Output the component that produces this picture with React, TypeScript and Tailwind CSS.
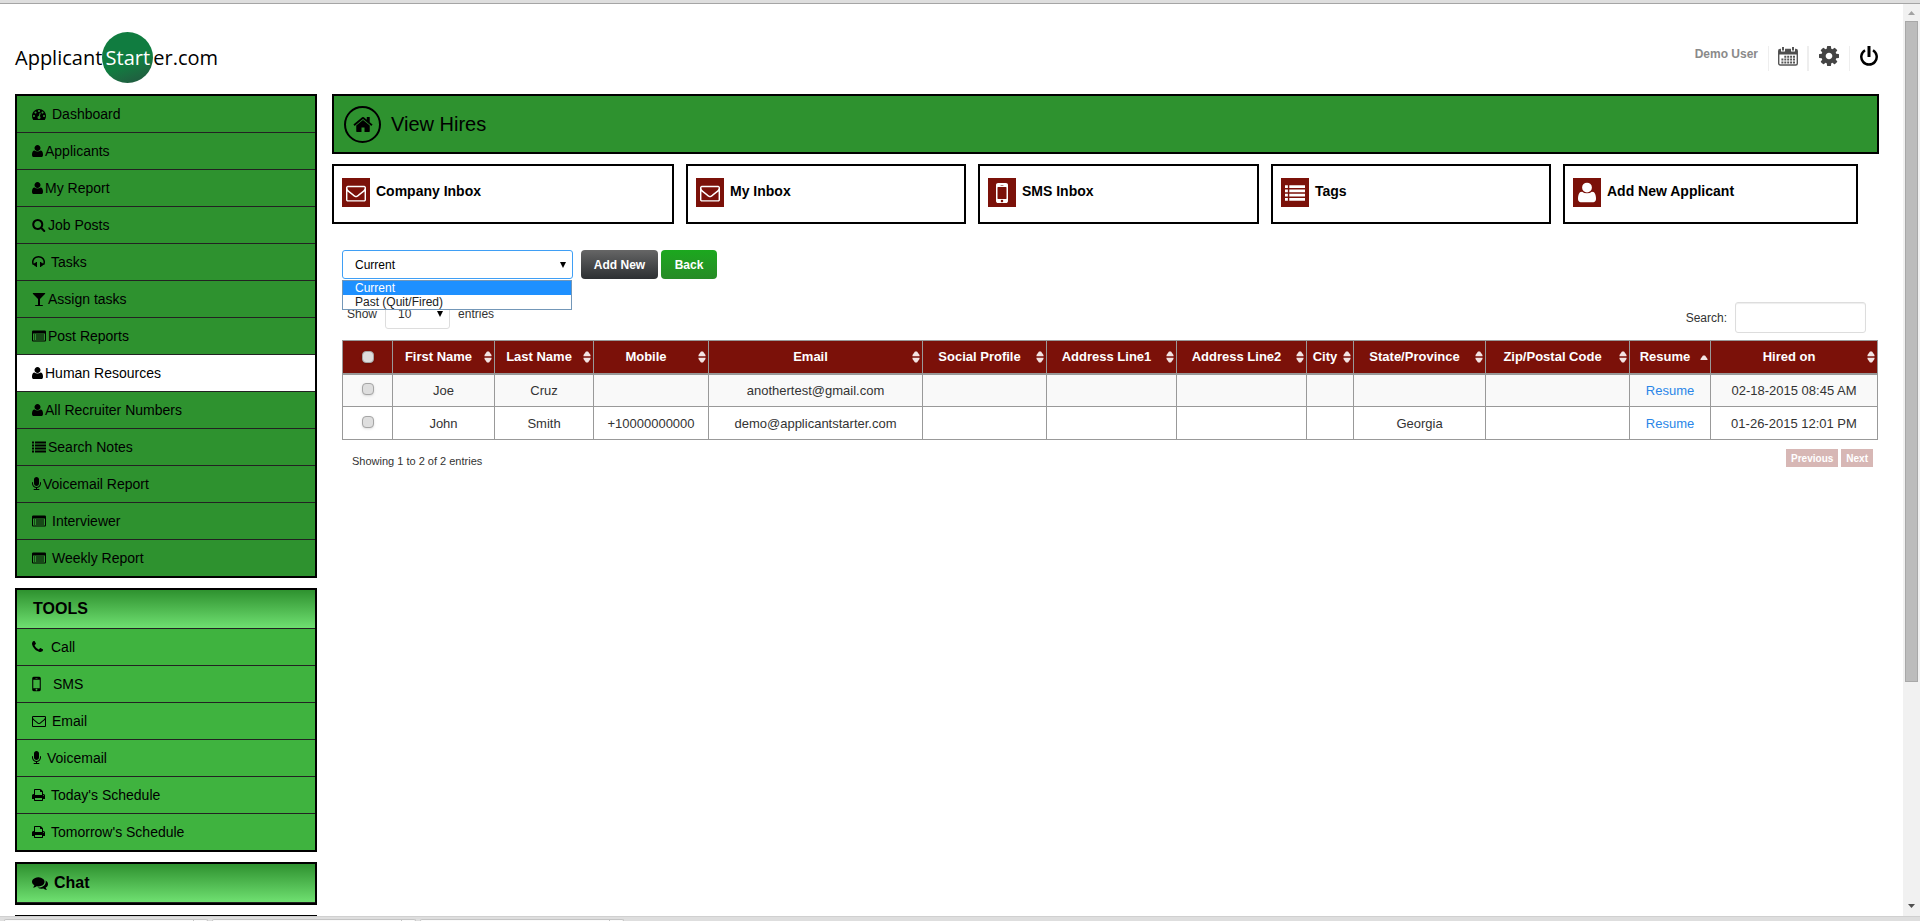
import React from "react";

interface Glyph {
  x: number;
  w: number;
  d: string;
}

// Glyphs on a 1792 unit em, x and w are the side crop of each one
const glyphs: Record<string, Glyph> = {
  user: {
    x: 256,
    w: 1408,
    d: "M1664 1399q0 109-62.5 187t-150.5 78h-982q-88 0-150.5-78t-62.5-187q0-85 8.5-160.5t31.5-152 58.5-131 94-89 134.5-34.5q131 128 377 128t377-128q76 0 134.5 34.5t94 89 58.5 131 31.5 152 8.5 160.5zm-320-887q0 159-112.5 271.5t-271.5 112.5-271.5-112.5-112.5-271.5 112.5-271.5 271.5-112.5 271.5 112.5 112.5 271.5z",
  },
  search: {
    x: 64,
    w: 1728,
    d: "M1216 832q0-185-131.5-316.5t-316.5-131.5-316.5 131.5-131.5 316.5 131.5 316.5 316.5 131.5 316.5-131.5 131.5-316.5zm512 832q0 52-38 90t-90 38q-54 0-90-38l-343-342q-179 124-399 124-143 0-273.5-55.5t-225-150-150-225-55.5-273.5 55.5-273.5 150-225 225-150 273.5-55.5 273.5 55.5 225 150 150 225 55.5 273.5q0 220-124 399l343 343q37 37 37 90z",
  },
  home: {
    x: 64,
    w: 1664,
    d: "M1472 992v480q0 26-19 45t-45 19h-384v-384h-256v384h-384q-26 0-45-19t-19-45v-480q0-1 .5-3t.5-3l575-474 575 474q1 2 1 6zm223-69l-62 74q-8 9-21 11h-3q-13 0-21-7l-692-577-692 577q-12 8-24 7-13-2-21-11l-62-74q-8-10-7-23.5t11-21.5l719-599q32-26 76-26t76 26l244 204v-195q0-14 9-23t23-9h192q14 0 23 9t9 23v408l219 182q10 8 11 21.5t-7 23.5z",
  },
  cog: {
    x: 128,
    w: 1536,
    d: "M1152 896q0-106-75-181t-181-75-181 75-75 181 75 181 181 75 181-75 75-181zm512-109v222q0 12-8 23t-20 13l-185 28q-19 54-39 91 35 50 107 138 10 12 10 25t-9 23q-27 37-99 108t-94 71q-12 0-26-9l-138-108q-44 23-91 38-16 136-29 186-7 28-36 28h-222q-14 0-24.5-8.5t-11.5-21.5l-28-184q-49-16-90-37l-141 107q-10 9-25 9-14 0-25-11-126-114-165-168-7-10-7-23 0-12 8-23 15-21 51-66.5t54-70.5q-27-50-41-99l-183-27q-13-2-21-12.5t-8-23.5v-222q0-12 8-23t19-13l186-28q14-46 39-92-40-57-107-138-10-12-10-24 0-10 9-23 26-36 98.5-107.5t94.5-71.5q13 0 26 10l138 107q44-23 91-38 16-136 29-186 7-28 36-28h222q14 0 24.5 8.5t11.5 21.5l28 184q49 16 90 37l142-107q9-9 24-9 13 0 25 10 129 119 165 170 7 8 7 22 0 12-8 23-15 21-51 66.5t-54 70.5q26 50 41 98l183 28q13 2 21 12.5t8 23.5z",
  },
  envelope: {
    x: 0,
    w: 1792,
    d: "M1664 1504v-768q-32 36-69 66-268 206-426 338-51 43-83 67t-86.5 48.5-102.5 24.5h-2q-48 0-102.5-24.5t-86.5-48.5-83-67q-158-132-426-338-37-30-69-66v768q0 13 9.5 22.5t22.5 9.5h1472q13 0 22.5-9.5t9.5-22.5zm0-1051v-24.5l-.5-13-3-12.5-5.5-9-9-7.5-14-2.5h-1472q-13 0-22.5 9.5t-9.5 22.5q0 168 147 284 193 152 401 317 6 5 35 29.5t46 37.5 44.5 31.5 50.5 27.5 43 9h2q20 0 43-9t50.5-27.5 44.5-31.5 46-37.5 35-29.5q208-165 401-317 54-43 100.5-115.5t46.5-131.5zm128-37v1088q0 66-47 113t-113 47h-1472q-66 0-113-47t-47-113v-1088q0-66 47-113t113-47h1472q66 0 113 47t47 113z",
  },
  mobile: {
    x: 512,
    w: 768,
    d: "M976 1408q0-33-23.5-56.5t-56.5-23.5-56.5 23.5-23.5 56.5 23.5 56.5 56.5 23.5 56.5-23.5 23.5-56.5zm208-160v-704q0-13-9.5-22.5t-22.5-9.5h-512q-13 0-22.5 9.5t-9.5 22.5v704q0 13 9.5 22.5t22.5 9.5h512q13 0 22.5-9.5t9.5-22.5zm-192-848q0-16-16-16h-160q-16 0-16 16t16 16h160q16 0 16-16zm288-16v1024q0 52-38 90t-90 38h-512q-52 0-90-38t-38-90v-1024q0-52 38-90t90-38h512q52 0 90 38t38 90z",
  },
  list: {
    x: 0,
    w: 1792,
    d: "M0 1344h256v256h-256zM0 960h256v256h-256zM0 576h256v256h-256zM384 1344h1408v256h-1408zM0 192h256v256h-256zM384 960h1408v256h-1408zM384 576h1408v256h-1408zM384 192h1408v256h-1408z",
  },
  listAlt: {
    x: 0,
    w: 1792,
    d: "M256 1216h128v128h-128zM256 960h128v128h-128zM256 704h128v128h-128zM512 1216h1024v128h-1024zM512 960h1024v128h-1024zM512 704h1024v128h-1024zM1664 1440v-832q0-13-9.500-22.500t-22.500-9.500h-1472q-13 0-22.500 9.500t-9.500 22.500v832q0 13 9.500 22.500t22.500 9.500h1472q13 0 22.500-9.500t9.500-22.500zM1792 352v1088q0 66-47 113t-113 47h-1472q-66 0-113-47t-47-113v-1088q0-66 47-113t113-47h1472q66 0 113 47t47 113z",
  },
  microphone: {
    x: 320,
    w: 1152,
    d: "M1472 704v128q0 221-147.5 384.5t-364.5 187.5v132h256q26 0 45 19t19 45-19 45-45 19h-640q-26 0-45-19t-19-45 19-45 45-19h256v-132q-217-24-364.5-187.5t-147.5-384.5v-128q0-26 19-45t45-19 45 19 19 45v128q0 185 131.5 316.5t316.5 131.5 316.5-131.5 131.5-316.5v-128q0-26 19-45t45-19 45 19 19 45zm-256-384v512q0 132-94 226t-226 94-226-94-94-226v-512q0-132 94-226t226-94 226 94 94 226z",
  },
  phone: {
    x: 192,
    w: 1408,
    d: "M1600 1240q0 27-10 70.5t-21 68.5q-21 50-122 106-94 51-186 51-27 0-53-3.5t-57.5-12.500-47-14.500-55.500-20.500-49-18q-98-35-175-83-127-79-264-216t-216-264q-48-77-83-175-3-9-18-49t-20.500-55.500-14.500-47-12.500-57.500-3.500-53q0-92 51-186 56-101 106-122 25-11 68.500-21t70.500-10q14 0 21 3 18 6 53 76 11 19 30 54t35 63.500 31 53.500q3 4 17.500 25t21.500 35.500 7 28.500q0 20-28.500 50t-62 55-62 53-28.500 46q0 9 5 22.500t8.500 20.500 14 24 11.500 19q76 137 174 235t235 174q2 1 19 11.500t24 14 20.500 8.500 22.500 5q18 0 46-28.500t53-62 55-62 50-28.500q14 0 28.500 7t35.500 21.500 25 17.500q25 15 53.500 31t63.500 35 54 30q70 35 76 53 3 7 3 21z",
  },
  glass: {
    x: 0,
    w: 1792,
    d: "M1699 186q0 35-43 78l-632 632v768h320q26 0 45 19t19 45-19 45-45 19h-896q-26 0-45-19t-19-45 19-45 45-19h320v-768l-632-632q-43-43-43-78 0-23 18-36.5t38-17.5 43-4h1408q23 0 43 4t38 17.5 18 36.5z",
  },
  headphones: {
    x: 64,
    w: 1664,
    d: "M1728 886q0 166-60 314l-20 49-185 33q-22 83-90.5 136.5t-156.5 53.5v32q0 14-9 23t-23 9h-64q-14 0-23-9t-9-23v-576q0-14 9-23t23-9h64q14 0 23 9t9 23v32q71 0 130 35.5t93 95.5l68-12q29-95 29-193 0-148-88-279t-236.5-209-315.5-78-315.5 78-236.500 209-88 279q0 98 29 193l68 12q34-60 93-95.500t130-35.500v-32q0-14 9-23t23-9h64q14 0 23 9t9 23v576q0 14-9 23t-23 9h-64q-14 0-23-9t-9-23v-32q-88 0-156.500-53.500t-90.500-136.500l-185-33-20-49q-60-148-60-314 0-151 67-291t179-242.500 266-163.500 320-61 320 61 266 163.500 179 242.500 67 291z",
  },
  dashboard: {
    x: 0,
    w: 1792,
    d: "M384 1152q0-53-37.5-90.5t-90.5-37.5-90.5 37.5-37.5 90.5 37.5 90.5 90.5 37.5 90.5-37.5 37.5-90.5zm192-448q0-53-37.5-90.5t-90.5-37.5-90.5 37.5-37.5 90.5 37.5 90.5 90.5 37.5 90.5-37.5 37.5-90.5zm428 481l101-382q6-26-7.5-48.5t-38.5-29.5-48 6.5-30 39.5l-101 382q-60 5-107 43.5t-63 98.5q-20 77 20 146t117 89 146-20 89-117q16-60-6-117t-72-91zm660-33q0-53-37.5-90.5t-90.5-37.5-90.5 37.5-37.5 90.5 37.5 90.5 90.5 37.5 90.5-37.5 37.5-90.5zm-640-640q0-53-37.5-90.5t-90.5-37.5-90.5 37.5-37.5 90.5 37.5 90.5 90.5 37.5 90.5-37.5 37.5-90.5zm448 192q0-53-37.5-90.5t-90.5-37.5-90.5 37.5-37.5 90.5 37.5 90.5 90.5 37.5 90.5-37.5 37.5-90.5zm320 448q0 261-141 483-19 29-54 29h-1402q-35 0-54-29-141-221-141-483 0-182 71-348t191-286 286-191 348-71 348 71 286 191 191 286 71 348z",
  },
  print: {
    x: 64,
    w: 1664,
    d: "M448 1536h896v-256h-896v256zm0-640h896v-384h-160q-40 0-68-28t-28-68v-160h-640v640zm1152 64q0-26-19-45t-45-19-45 19-19 45 19 45 45 19 45-19 19-45zm128 0v416q0 13-9.5 22.5t-22.5 9.5h-224v160q0 40-28 68t-68 28h-960q-40 0-68-28t-28-68v-160h-224q-13 0-22.5-9.5t-9.5-22.5v-416q0-79 56.5-135.5t135.5-56.5h64v-544q0-40 28-68t68-28h672q40 0 88 20t76 48l152 152q28 28 48 76t20 88v256h64q79 0 135.5 56.5t56.5 135.5z",
  },
  comments: {
    x: 0,
    w: 1792,
    d: "M1408 768q0 139-94 257t-256.5 186.5-353.5 68.5q-86 0-176-16-124 88-278 128-36 9-86 16h-3q-11 0-20.5-8t-11.5-21q-1-3-1-6.5t.5-6.5 2-6l2.5-5 3.5-5.5 4-5 4.5-5 4-4.5q5-6 23-25t26-29.5 22.5-29 25-38.5 20.5-44q-124-72-195-177t-71-224q0-139 94-257t256.5-186.5 353.5-68.5 353.5 68.5 256.5 186.5 94 257zm384 256q0 120-71 224.5t-195 176.5q10 24 20.5 44t25 38.5 22.5 29 26 29.5 23 25q1 1 4 4.5t4.5 5 4 5 3.5 5.5l2.5 5 2 6 .5 6.5-1 6.5q-3 14-13 22t-22 7q-50-7-86-16-154-40-278-128-90 16-176 16-271 0-472-132 58 4 88 4 161 0 309-45t264-129q125-92 192-212t67-254q0-77-23-152 129 71 204 178t75 230z",
  },
};

const Icon: React.FC<{ name: string; size?: number }> = ({ name, size = 14 }) => {
  const g = glyphs[name];
  return (
    <svg
      aria-hidden="true"
      className="shrink-0"
      width={Math.round((g.w / 1792) * size)}
      height={size}
      viewBox={`${g.x} 0 ${g.w} 1792`}
      fill="currentColor"
    >
      <path d={g.d} />
    </svg>
  );
};

interface MenuItem {
  label: string;
  icon: string;
  gap: string;
  size?: number;
  active?: boolean;
}

const mainMenu: MenuItem[] = [
  { label: "Dashboard", icon: "dashboard", gap: "gap-1.5" },
  { label: "Applicants", icon: "user", gap: "gap-0.5" },
  { label: "My Report", icon: "user", gap: "gap-0.5" },
  { label: "Job Posts", icon: "search", gap: "gap-0.5" },
  { label: "Tasks", icon: "headphones", gap: "gap-1.5" },
  { label: "Assign tasks", icon: "glass", gap: "gap-0.5" },
  { label: "Post Reports", icon: "listAlt", gap: "gap-0.5" },
  { label: "Human Resources", icon: "user", gap: "gap-0.5", active: true },
  { label: "All Recruiter Numbers", icon: "user", gap: "gap-0.5" },
  { label: "Search Notes", icon: "list", gap: "gap-0.5" },
  { label: "Voicemail Report", icon: "microphone", gap: "gap-0.5" },
  { label: "Interviewer", icon: "listAlt", gap: "gap-1.5" },
  { label: "Weekly Report", icon: "listAlt", gap: "gap-1.5" },
];

const toolsMenu: MenuItem[] = [
  { label: "Call", icon: "phone", gap: "gap-2" },
  { label: "SMS", icon: "mobile", gap: "gap-3", size: 20 },
  { label: "Email", icon: "envelope", gap: "gap-1.5" },
  { label: "Voicemail", icon: "microphone", gap: "gap-1.5" },
  { label: "Today's Schedule", icon: "print", gap: "gap-1.5" },
  { label: "Tomorrow's Schedule", icon: "print", gap: "gap-1.5" },
];

const cards = [
  { label: "Company Inbox", icon: "envelope", size: 20 },
  { label: "My Inbox", icon: "envelope", size: 20 },
  { label: "SMS Inbox", icon: "mobile", size: 28 },
  { label: "Tags", icon: "list", size: 20 },
  { label: "Add New Applicant", icon: "user", size: 23 },
];

interface Column {
  label: string;
  width: number;
  sorted?: boolean;
}

const columns: Column[] = [
  { label: "First Name", width: 102 },
  { label: "Last Name", width: 99 },
  { label: "Mobile", width: 115 },
  { label: "Email", width: 214 },
  { label: "Social Profile", width: 124 },
  { label: "Address Line1", width: 130 },
  { label: "Address Line2", width: 130 },
  { label: "City", width: 47 },
  { label: "State/Province", width: 132 },
  { label: "Zip/Postal Code", width: 144 },
  { label: "Resume", width: 81, sorted: true },
  { label: "Hired on", width: 167 },
];

const hires = [
  ["Joe", "Cruz", "", "anothertest@gmail.com", "", "", "", "", "", "", "Resume", "02-18-2015 08:45 AM"],
  ["John", "Smith", "+10000000000", "demo@applicantstarter.com", "", "", "", "", "Georgia", "", "Resume", "01-26-2015 12:01 PM"],
];

const Menu: React.FC<{ items: MenuItem[] }> = ({ items }) => (
  <ul className="divide-y divide-[#222]">
    {items.map((item) => (
      <li key={item.label}>
        <a
          href="#"
          className={`flex h-9 items-center pl-[15px] text-sm ${item.gap} ${
            item.active ? "bg-white" : ""
          }`}
        >
          <Icon name={item.icon} size={item.size} />
          {item.label}
        </a>
      </li>
    ))}
  </ul>
);

const Caret = () => (
  <svg
    aria-hidden="true"
    className="pointer-events-none absolute top-1/2 right-[7px] -translate-y-1/2"
    width="6"
    height="6"
    viewBox="0 0 6 6"
  >
    <path d="M0 0h6L3 6z" />
  </svg>
);

const SortIcon: React.FC<{ sorted?: boolean }> = ({ sorted }) => (
  <svg aria-hidden="true" className="shrink-0" width="8" height="12" viewBox="0 0 8 12" fill="#f3e4e3">
    {sorted ? (
      <path d="M0.500 9V8l2.500-3.500h2L7.500 8v1z" />
    ) : (
      <>
        <path d="M0.500 5.200V4L3 .5h2L7.500 4v1.200z" />
        <path d="M0.500 6.800V8L3 11.500h2L7.500 8V6.800z" />
      </>
    )}
  </svg>
);

const CalendarIcon = () => (
  <svg aria-hidden="true" width="20" height="19" viewBox="0 0 20 19">
    <rect x="0.700" y="2.500" width="18.600" height="15.500" rx="1.500" fill="#fff" stroke="#555" strokeWidth="1.400" />
    <path fill="#4d4d4d" d="M1 3h18v4.500H1z" />
    <path fill="#fff" d="M3 0h4v4.500H3zM13 0h4v4.500h-4z" />
    <path fill="#555" d="M4 0h2v3.500H4zM14 0h2v3.500h-2z" />
    <path
      fill="#555"
      d="M6.300 8.800h2v2h-2zM9.200 8.800h2v2h-2zM12.100 8.800h2v2h-2zM15 8.800h2v2h-2zM3.400 11.600h2v2h-2zM6.300 11.600h2v2h-2zM9.200 11.600h2v2h-2zM12.100 11.600h2v2h-2zM15 11.600h2v2h-2zM3.400 14.400h2v2h-2zM6.300 14.400h2v2h-2zM9.200 14.400h2v2h-2zM12.100 14.400h2v2h-2zM15 14.400h2v2h-2z"
    />
  </svg>
);

const PowerIcon = () => (
  <svg aria-hidden="true" width="18" height="20" viewBox="0 0 18 20" fill="none" stroke="#000">
    <path strokeWidth="2.500" d="M5 4.300a7.700 7.700 0 1 0 8 0" />
    <path strokeWidth="3" d="M9 0v11" />
  </svg>
);

const checkboxClass =
  "block mx-auto size-3 appearance-none rounded-sm border border-[#a5a5a5] bg-[#dedede] shadow-sm";

const App: React.FC = () => {
  return (
    <div className="flex h-screen flex-col overflow-hidden bg-white font-['Liberation_Sans',Arial,sans-serif] text-black">
      <div className="h-1 shrink-0 border-b border-[#a5a5a5] bg-[#dedede]" />

      <div className="flex min-h-0 flex-1">
        <div className="min-w-0 flex-1 overflow-hidden pr-6 pl-[15px]">
          {/* Header */}
          <header className="flex h-[90px] items-start justify-between pr-px">
            <a
              href="#"
              className="mt-7 flex items-center font-['Open_Sans',sans-serif] text-xl leading-[51px]"
            >
              Applicant
              <span className="flex size-[51px] items-center justify-center rounded-full bg-linear-160 from-[#107c40] from-60% to-[#21533f] text-white">
                Start
              </span>
              er.com
            </a>
            <div className="mt-[42px] flex h-[25px] items-start">
              <span className="pr-2.5 text-xs leading-4 font-bold text-[#8a8a8a]">Demo User</span>
              <a href="#" aria-label="Calendar" className="h-full border-l border-[#eee] px-[9px] pt-px">
                <CalendarIcon />
              </a>
              <a href="#" aria-label="Settings" className="h-full border-l-2 border-[#eee] px-2.5 text-[#444]">
                <svg aria-hidden="true" width="20" height="20" viewBox="128 128 1536 1536" fill="currentColor">
                  <path d={glyphs.cog.d} />
                </svg>
              </a>
              <a href="#" aria-label="Log out" className="h-full border-l border-[#eee] pl-2.5">
                <PowerIcon />
              </a>
            </div>
          </header>

          <div className="flex items-start gap-[15px]">
            {/* Sidebar */}
            <aside className="flex w-[302px] shrink-0 flex-col gap-2.5">
              <nav className="border-2 border-black bg-[#2e922f]">
                <Menu items={mainMenu} />
              </nav>
              <nav className="border-2 border-black bg-[#3fb33f]">
                <h2 className="flex h-[39px] items-center border-b border-[#222] bg-linear-to-b from-[#2e922f] to-[#6fe071] pl-4 text-base font-bold">
                  TOOLS
                </h2>
                <Menu items={toolsMenu} />
              </nav>
              <section className="border-2 border-black">
                <h2 className="flex h-[39px] items-center gap-1.5 border-b border-[#222] bg-linear-to-b from-[#2e922f] to-[#6fe071] pl-[15px] text-base font-bold">
                  <Icon name="comments" size={16} />
                  Chat
                </h2>
              </section>
              <section className="h-10 border-2 border-black" />
            </aside>

            {/* Content */}
            <main className="min-w-0 flex-1">
              <div className="flex h-[60px] items-center gap-2.5 border-2 border-black bg-[#2e922f] pl-2.5">
                <span className="flex size-[37px] items-center justify-center rounded-full border-2 border-black">
                  <Icon name="home" size={21} />
                </span>
                <h1 className="text-xl">View Hires</h1>
              </div>

              <div className="mt-2.5 grid grid-cols-[342fr_280fr_281fr_280fr_295fr] gap-3 pr-[21px]">
                {cards.map((card) => (
                  <a
                    key={card.label}
                    href="#"
                    className="flex h-[60px] items-start gap-1.5 border-2 border-black pt-3 pl-2 text-sm leading-[26px] font-bold"
                  >
                    <span className="flex h-[29px] w-7 items-center justify-center bg-[#7b1109] text-white">
                      <Icon name={card.icon} size={card.size} />
                    </span>
                    {card.label}
                  </a>
                ))}
              </div>

              <div className="mt-[26px] pr-0.5 pl-2.5">
                <div className="flex gap-[3px] text-xs">
                  <div className="relative mr-[5px] w-[231px]">
                    <select
                      aria-label="Hire status"
                      defaultValue="Current"
                      className="block h-[29px] w-full appearance-none rounded-[3px] border border-[#3f9ff5] bg-white pl-3 outline-none"
                    >
                      <option>Current</option>
                      <option>Past (Quit/Fired)</option>
                    </select>
                    <Caret />
                    <ul
                      role="listbox"
                      aria-label="Hire status options"
                      className="absolute top-[30px] left-0 z-10 w-[230px] border border-[#7397b8] bg-white leading-[14px] text-[#222]"
                    >
                      <li role="option" aria-selected="true" className="bg-[#1e90ff] pl-3 text-white">
                        Current
                      </li>
                      <li role="option" aria-selected="false" className="pl-3">
                        Past (Quit/Fired)
                      </li>
                    </ul>
                  </div>
                  <button
                    type="button"
                    className="h-[29px] w-[77px] rounded bg-linear-to-b from-[#666] to-[#2d3033] font-bold text-white"
                  >
                    Add New
                  </button>
                  <button
                    type="button"
                    className="h-[29px] w-14 rounded bg-linear-to-b from-[#1ba81e] to-[#268b26] font-bold text-white"
                  >
                    Back
                  </button>
                </div>

                <div className="mt-5 mb-[7px] flex items-start justify-between pr-[11px] pl-[5px] text-xs text-[#333]">
                  <label className="flex items-center gap-2">
                    Show
                    <span className="relative">
                      <select className="block h-[30px] w-[65px] appearance-none rounded-[3px] border border-[#ddd] bg-white pl-3">
                        <option>10</option>
                      </select>
                      <Caret />
                    </span>
                    entries
                  </label>
                  <label className="flex items-center gap-2 pt-[3px]">
                    Search:
                    <input
                      type="search"
                      className="h-[31px] w-[131px] rounded-[3px] border border-[#ddd] px-2 shadow-[inset_0_1px_1px_#eee]"
                    />
                  </label>
                </div>

                <table className="w-full table-fixed border-collapse border border-[#bbb] text-[13px] text-[#333]">
                  <colgroup>
                    <col style={{ width: 50 }} />
                    {columns.map((col) => (
                      <col key={col.label} style={{ width: col.width }} />
                    ))}
                  </colgroup>
                  <thead className="border-b-2 border-[#999] bg-[#7b1109] text-white">
                    <tr className="h-[33px]">
                      <th className="border border-[#999] p-0">
                        <input type="checkbox" aria-label="Select all" className={checkboxClass} />
                      </th>
                      {columns.map((col) => (
                        <th key={col.label} className="border border-[#999] p-0 font-bold">
                          <div className="flex items-center pr-0.5">
                            <span className="flex-1 whitespace-nowrap">{col.label}</span>
                            <SortIcon sorted={col.sorted} />
                          </div>
                        </th>
                      ))}
                    </tr>
                  </thead>
                  <tbody>
                    {hires.map((row, idx) => (
                      <tr key={idx} className="h-[33px] text-center odd:bg-[#f9f9f9]">
                        <td className="border border-[#999] p-0 pb-0.5">
                          <input type="checkbox" aria-label={`Select ${row[0]}`} className={checkboxClass} />
                        </td>
                        {row.map((cell, i) => (
                          <td key={i} className="border border-[#999] p-0 pt-px">
                            {cell === "Resume" ? (
                              <a href="#" className="text-[#2a86e8]">
                                {cell}
                              </a>
                            ) : (
                              cell
                            )}
                          </td>
                        ))}
                      </tr>
                    ))}
                  </tbody>
                </table>

                <div className="mt-[9px] flex items-start justify-between pr-1 pl-2.5">
                  <p className="text-[11px] leading-6 text-[#333]">Showing 1 to 2 of 2 entries</p>
                  <div className="flex gap-[3px] text-[10px] font-bold text-white">
                    <button type="button" className="h-[18px] bg-[#d7b7b5] px-[5px]">
                      Previous
                    </button>
                    <button type="button" className="h-[18px] bg-[#d7b7b5] px-[5px]">
                      Next
                    </button>
                  </div>
                </div>
              </div>
            </main>
          </div>
        </div>

        {/* Scroll track */}
        <div className="flex w-[17px] shrink-0 flex-col items-center justify-between bg-[#f1f1f1] pb-2">
          <div className="flex h-3/4 w-full flex-col items-center px-0.5 pt-[7px]">
            <svg aria-hidden="true" className="shrink-0" width="7" height="4" viewBox="0 0 7 4" fill="#a3a3a3">
              <path d="M0 4 3.500 0 7 4z" />
            </svg>
            <div className="mt-1.5 w-[13px] flex-1 border border-[#a8a8a8] bg-[#bcbcbc]" />
          </div>
          <svg aria-hidden="true" width="7" height="4" viewBox="0 0 7 4" fill="#505050">
            <path d="M0 0h7L3.500 4z" />
          </svg>
        </div>
      </div>

      <div className="flex h-[5px] shrink-0 gap-1 border-t border-[#d0d0d0] bg-[#dedede] pt-0.5 pl-1">
        {[0, 1, 2].map((tab) => (
          <div key={tab} className="flex w-[204px] justify-end rounded-t-sm border border-b-0 border-[#c4c4c4] bg-[#fafafa]">
            <span className="w-3.5 border-l border-[#c4c4c4]" />
          </div>
        ))}
      </div>
    </div>
  );
};

export default App;
